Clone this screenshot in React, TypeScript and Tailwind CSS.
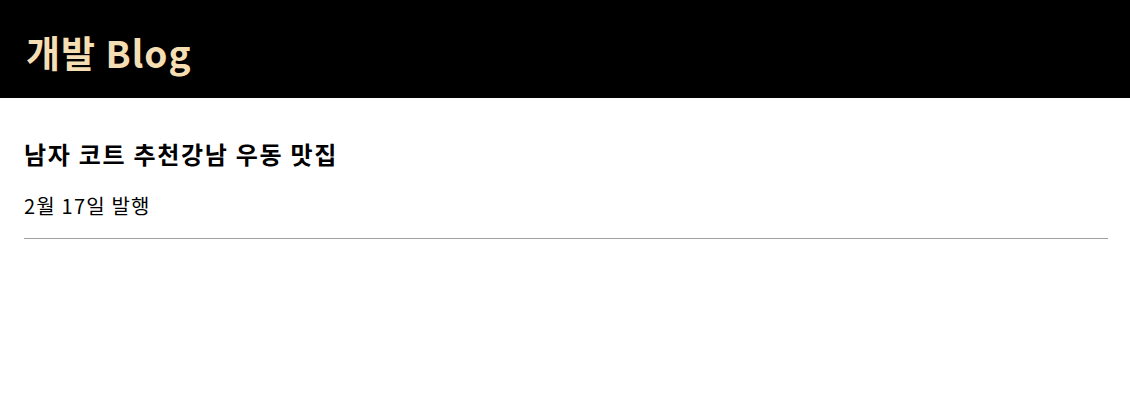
export default function App() {
  const font = { fontFamily: '"Noto Sans CJK KR", "Noto Sans", sans-serif' };
  return (
    <div className="min-h-[404px] bg-white" style={font}>
      <header className="flex h-[98px] items-center bg-black pl-[26px] pt-[6px]">
        <h1 className="text-[37px] font-bold leading-none tracking-[1px] text-[#f5deb3]">개발 Blog</h1>
      </header>
      <div className="ml-6 mr-[22px] border-b border-[#a0a0a0] pt-[44px] pb-[22px]">
        <h4 className="text-[24px] font-bold leading-none tracking-[1.7px] text-black">남자 코트 추천강남 우동 맛집</h4>
        <p className="mt-[30px] text-[20px] leading-none tracking-[1.2px] text-black">2월 17일 발행</p>
      </div>
    </div>
  );
}
